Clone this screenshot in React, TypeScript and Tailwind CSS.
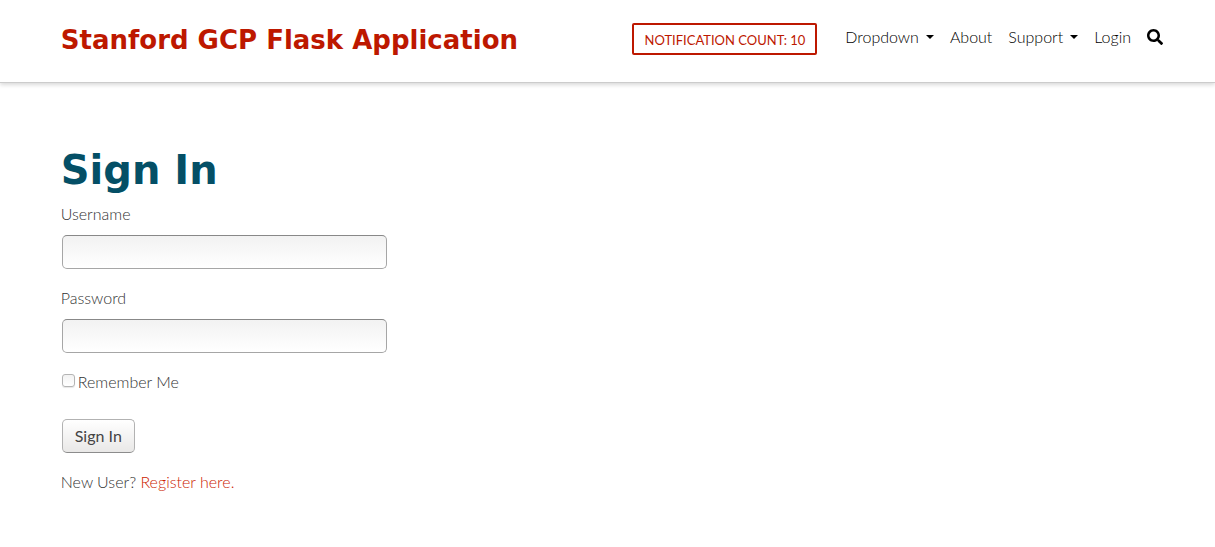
import { FaSearch } from "react-icons/fa";

const fieldClass =
  "block h-[34px] w-full rounded-[5px] border border-[#a6a6a6] border-t-[#888] bg-linear-to-b from-[#f2f2f2] to-white px-2 text-base text-[#333]";

function Caret() {
  return (
    <svg viewBox="0 0 8 4" className="h-1 w-2" fill="currentColor" aria-hidden="true">
      <path d="M0 0h8L4 4z" />
    </svg>
  );
}

function Header() {
  return (
    <header className="flex min-h-[83px] flex-wrap items-start justify-between border-b border-[#ccc] pr-[52px] pl-[5%] pt-[23px] shadow-[0_2px_4px_rgba(0,0,0,0.15)]">
      <a href="#" className="font-['DejaVu_Sans',sans-serif] text-[26px] leading-[34px] font-bold text-[#bd1800]">
        Stanford GCP Flask Application
      </a>
      <div className="flex items-start">
        <button
          type="button"
          className="mr-7 h-8 rounded-xs border-2 border-[#bd1800] px-2.5 text-[13px] leading-[30px] font-normal text-[#bd1800]"
        >
          NOTIFICATION COUNT: 10
        </button>
        <nav className="flex items-center gap-4 leading-7 text-black">
          <button type="button" className="flex items-center gap-[7px]">
            Dropdown
            <Caret />
          </button>
          <a href="#">About</a>
          <button type="button" className="flex items-center gap-[7px]">
            Support
            <Caret />
          </button>
          <a href="#">Login</a>
          <button type="button" aria-label="Search">
            <FaSearch className="size-4" aria-hidden="true" />
          </button>
        </nav>
      </div>
    </header>
  );
}

export default function App() {
  return (
    <div className="min-h-screen bg-white font-['Lato',sans-serif] text-base leading-6 font-light text-[#333]">
      <Header />
      <main className="px-[5%] pt-[62px]">
        <h1 className="font-['DejaVu_Sans',sans-serif] text-[40px] leading-[50px] font-bold text-[#044f66]">Sign In</h1>
        <form className="mt-[7px] w-[326px]" onSubmit={(e) => e.preventDefault()}>
          <div className="pl-px">
            <label htmlFor="username" className="-ml-px block pb-[9px]">Username</label>
            <input id="username" type="text" className={fieldClass} />
          </div>
          <div className="mt-[17px] pl-px">
            <label htmlFor="password" className="-ml-px block pb-[9px]">Password</label>
            <input id="password" type="password" className={fieldClass} />
          </div>
          <div className="mt-[17px] flex items-center gap-[3px] pl-px">
            <input
              id="remember"
              type="checkbox"
              className="mb-1 size-[13px] appearance-none rounded-[3px] border border-[#b4b4b4] bg-linear-to-b from-[#f2f2f2] to-white shadow-[0_1px_1px_rgba(0,0,0,0.1)] checked:bg-[#044f66]"
            />
            <label htmlFor="remember">Remember Me</label>
          </div>
          <button
            type="submit"
            className="mt-[25px] ml-px h-[34px] rounded-[5px] border border-[#b2b2b2] border-b-[#8c8c8c] bg-linear-to-b from-white to-[#e9e8e7] px-3 font-normal text-[#444]"
          >
            Sign In
          </button>
        </form>
        <p className="mt-[17px]">
          New User?{" "}
          <a href="#" className="text-[#cc1c00]">Register here.</a>
        </p>
      </main>
    </div>
  );
}
